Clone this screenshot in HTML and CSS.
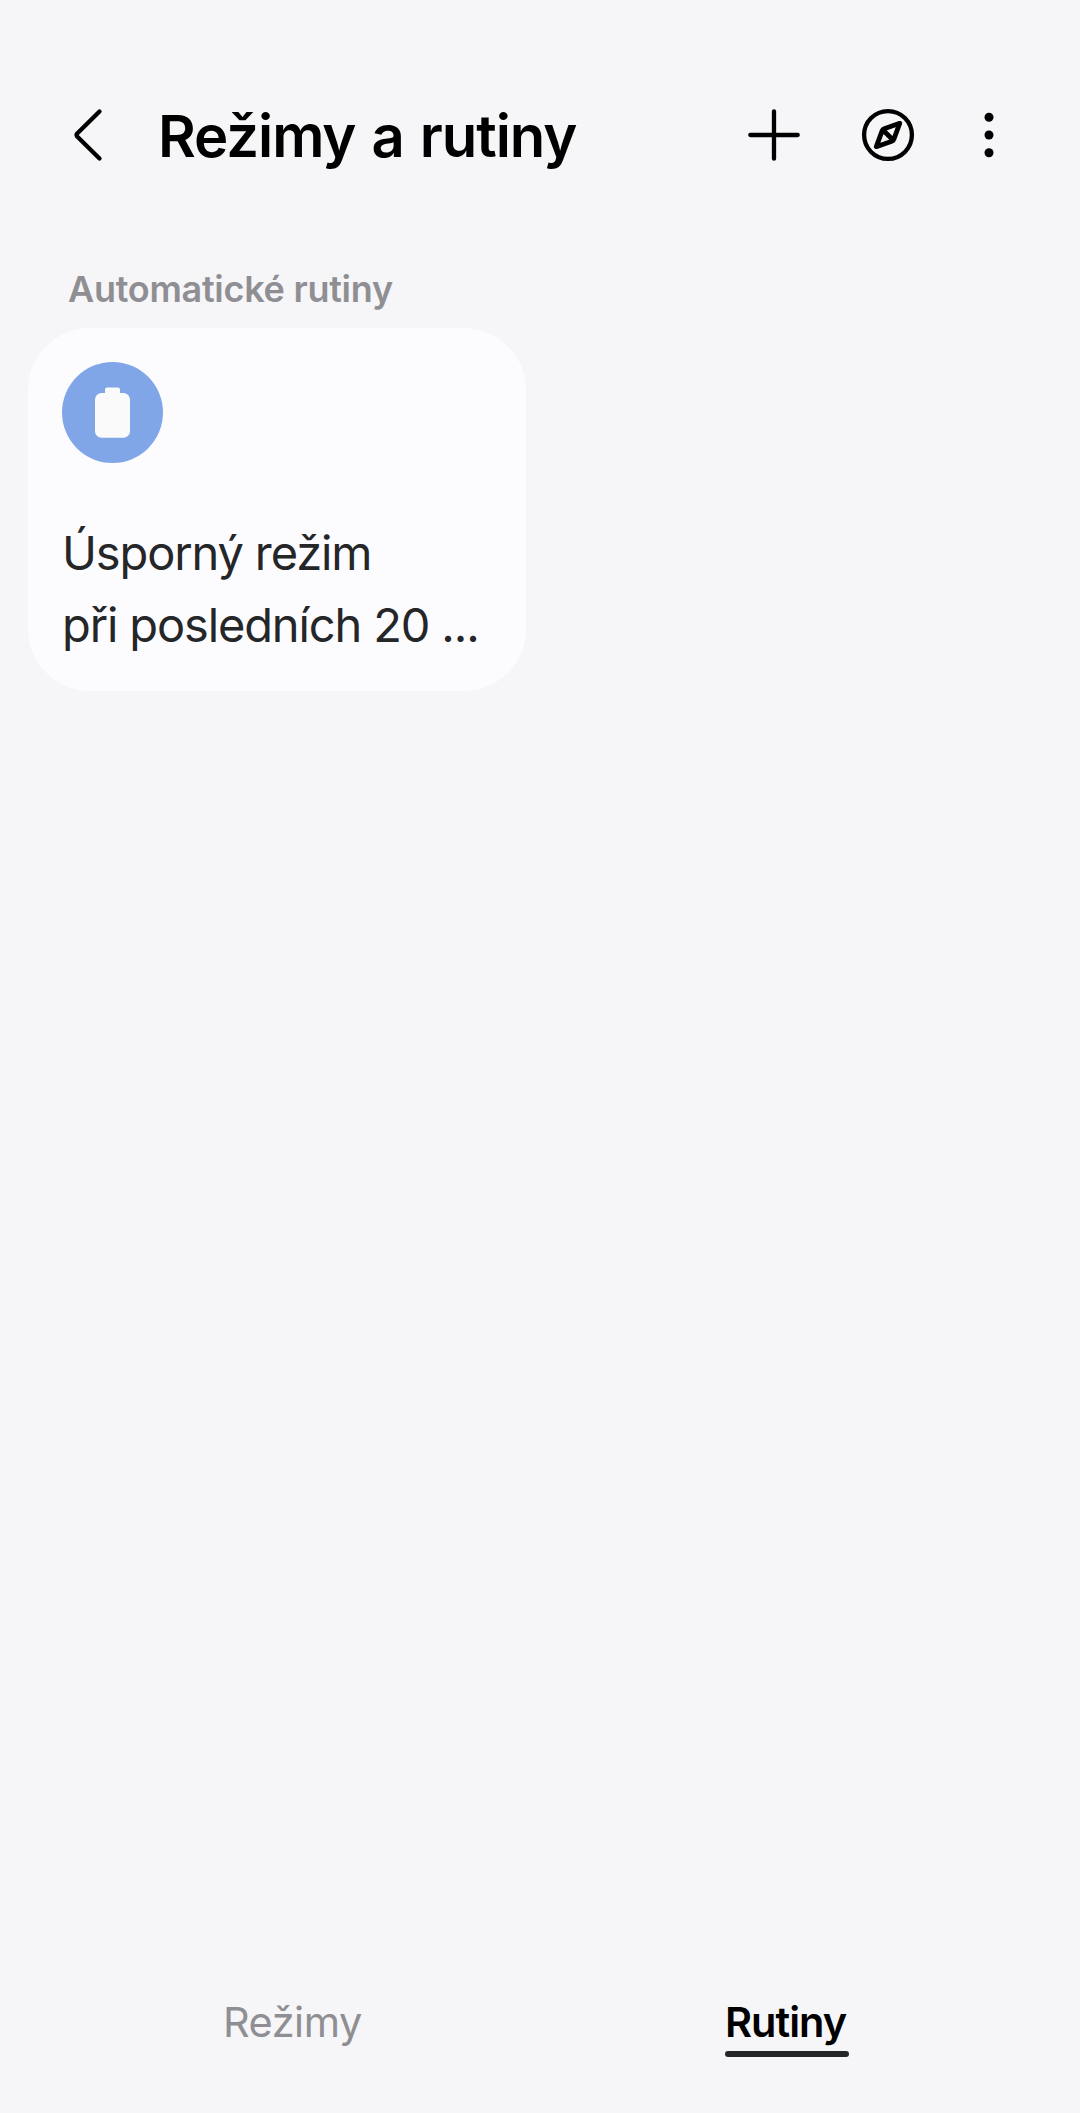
FILE: index.html
```html
<!DOCTYPE html>
<html lang="cs">
<head>
<meta charset="utf-8">
<title>Režimy a rutiny</title>
<link rel="stylesheet" href="styles.css">
</head>
<body>
<div class="screen">
  <header class="bar">
    <svg class="back" width="40" height="60" viewBox="0 0 40 60"><path d="M30.500 6.500 8.200 28.500Q6.900 30 8.200 31.500L30.500 53.500"/></svg>
    <h1 class="title">Režimy a rutiny</h1>
    <nav class="actions">
      <svg width="60" height="60" viewBox="0 0 60 60"><path d="M30 6.300V53.700M6.300 30H53.700"/></svg>
      <svg class="compass" width="60" height="60" viewBox="0 0 60 60"><circle cx="30" cy="30" r="23.900"/><path class="needle" d="M41.700 18.300 26.200 23.700Q24.700 24.200 24.200 25.700L18.300 41.700 33.800 36.300Q35.300 35.800 35.800 34.300ZM24.700 24.700 35.300 35.300"/></svg>
      <svg class="more" width="20" height="60" viewBox="0 0 20 60"><circle cx="10" cy="12.300" r="4.500"/><circle cx="10" cy="30" r="4.500"/><circle cx="10" cy="47.700" r="4.500"/></svg>
    </nav>
  </header>
  <main class="content">
    <h2 class="section">Automatické rutiny</h2>
    <article class="card">
      <svg class="badge" width="101" height="101" viewBox="0 0 101 101"><circle cx="50.500" cy="50.500" r="50.500"/><rect x="33" y="31" width="35" height="44.700" rx="6.500"/><path d="M43 34V27.500Q43 25.500 45 25.500H56Q58 25.500 58 27.500V34Z"/></svg>
      <p class="name">Úsporný režim<br>při posledních 20 ...</p>
    </article>
  </main>
  <footer class="tabs">
    <a class="tab">Režimy</a>
    <a class="tab tab-active">Rutiny</a>
  </footer>
</div>
</body>
</html>
```
FILE: styles.css
```css
* { box-sizing: border-box; margin: 0; }
body { background: #f6f6f8; font-family: Inter, "Noto Sans", sans-serif; }
.screen { display: flex; flex-direction: column; width: 1080px; height: 2113px; overflow: hidden; }
svg { display: block; flex: none; fill: none; stroke: #000; stroke-width: 4.3; stroke-linecap: round; stroke-linejoin: round; }
.bar { display: flex; align-items: center; height: 120px; margin-top: 75px; padding: 0 81px 0 69px; }
.title { margin-left: 49px; padding-top: 2px; font-size: 58px; line-height: 80px; font-weight: 600; letter-spacing: -1.05px; word-spacing: 2.5px; white-space: nowrap; }
.actions { display: flex; margin-left: auto; }
.compass { margin-left: 54px; }
.needle { stroke-width: 4.8; }
.more { margin-left: 61px; fill: #000; stroke: none; }
.content { flex: 1; padding: 69px 28px 0; }
.section { margin-left: 40px; height: 64px; font-size: 36px; line-height: 50px; font-weight: 600; letter-spacing: -0.28px; color: #8f8f93; }
.card { width: 498px; height: 363px; padding: 34px; border-radius: 62px; background: #fcfcff; }
.badge { fill: #fafafa; stroke: none; }
.badge circle { fill: #80a6e8; }
.name { margin-top: 54px; font-size: 47px; line-height: 72px; color: #252628; white-space: nowrap; letter-spacing: -1.13px; }
.tabs { display: flex; justify-content: space-between; height: 116px; padding: 0 231px 0 223px; }
.tab { font-size: 41.5px; line-height: 50px; white-space: nowrap; color: #8f8f93; letter-spacing: -0.5px; }
.tab-active { width: 124px; color: #000; font-weight: 600; letter-spacing: -1px; }
.tab-active::after { content: ""; display: block; height: 6px; margin-top: 4px; border-radius: 3px; background: #252628; }
```
